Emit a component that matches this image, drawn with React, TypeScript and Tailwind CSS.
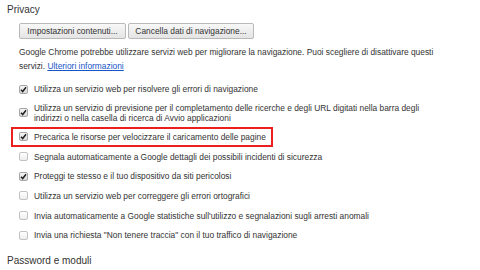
import type { FC, ReactNode } from "react";

const Checkbox: FC<{ checked: boolean }> = ({ checked }) => (
  <span
    className={`flex h-[9px] w-[9px] shrink-0 items-center justify-center rounded-[2px] border ${
      checked
        ? "border-[#a6a6a6] bg-gradient-to-b from-[#f6f6f6] to-[#dadada]"
        : "border-[#c2c2c2] bg-gradient-to-b from-white to-[#ededed]"
    }`}
  >
    {checked && (
      <svg width="7" height="7" viewBox="0 0 7 7">
        <path d="M1 3.8 L2.7 5.5 L6 1.2" fill="none" stroke="#222" strokeWidth="1.5" />
      </svg>
    )}
  </span>
);

const Option: FC<{ checked: boolean; children: ReactNode; tall?: boolean; marked?: boolean }> = ({
  checked,
  children,
  tall,
  marked,
}) => (
  <div className={`relative flex items-center gap-[6px] pl-[19px] ${tall ? "h-[28px]" : "h-[19.7px]"}`}>
    <Checkbox checked={checked} />
    <p className="whitespace-nowrap text-[8.4px] leading-[10px]">{children}</p>
    {marked && <span className="absolute left-[11px] top-0 h-full w-[262px] border-2 border-[#ec1f1f]" />}
  </div>
);

const Button: FC<{ text: string; width: string }> = ({ text, width }) => (
  <button
    type="button"
    className={`${width} h-[16px] rounded-[2px] border border-[#b9b9b9] bg-gradient-to-b from-[#f8f8f8] to-[#e4e4e4] text-[8.4px] leading-none text-[#333]`}
  >
    {text}
  </button>
);

export default function App() {
  return (
    <div
      className="h-[270px] w-[480px] overflow-hidden bg-white text-[#333]"
      style={{ fontFamily: '"Liberation Sans", Arial, sans-serif' }}
    >
      <h2 className="pl-[7px] pt-[4px] text-[10px] leading-[12px]">Privacy</h2>
      <div className="mt-[7px] flex gap-[2px] pl-[19px]">
        <Button text="Impostazioni contenuti..." width="w-[107px]" />
        <Button text="Cancella dati di navigazione..." width="w-[126px]" />
      </div>
      <p className="mt-[6px] whitespace-nowrap pl-[19px] text-[8.4px] leading-[14px]">
        Google Chrome potrebbe utilizzare servizi web per migliorare la navigazione. Puoi scegliere di disattivare questi
        <br />
        servizi. <a className="text-[#1a55c7] underline">Ulteriori informazioni</a>
      </p>
      <div className="mt-[6.3px] flex flex-col">
        <Option checked>Utilizza un servizio web per risolvere gli errori di navigazione</Option>
        <Option checked tall>
          Utilizza un servizio di previsione per il completamento delle ricerche e degli URL digitati nella barra degli
          <br />
          indirizzi o nella casella di ricerca di Avvio applicazioni
        </Option>
        <Option checked marked>
          Precarica le risorse per velocizzare il caricamento delle pagine
        </Option>
        <Option checked={false}>Segnala automaticamente a Google dettagli dei possibili incidenti di sicurezza</Option>
        <Option checked>Proteggi te stesso e il tuo dispositivo da siti pericolosi</Option>
        <Option checked={false}>Utilizza un servizio web per correggere gli errori ortografici</Option>
        <Option checked={false}>
          Invia automaticamente a Google statistiche sull'utilizzo e segnalazioni sugli arresti anomali
        </Option>
        <Option checked={false}>Invia una richiesta "Non tenere traccia" con il tuo traffico di navigazione</Option>
      </div>
      <h2 className="mt-[10px] pl-[7px] text-[10px] leading-[12px]">Password e moduli</h2>
    </div>
  );
}
